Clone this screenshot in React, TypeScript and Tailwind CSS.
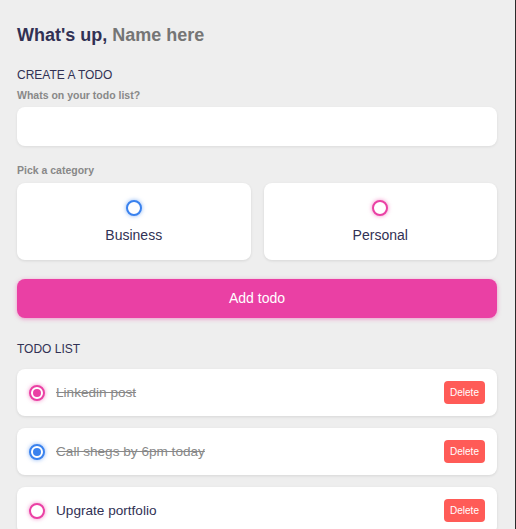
import React from "react";

type Todo = { id: number; content: string; category: "business" | "personal"; done: boolean };

const todos: Todo[] = [
  { id: 1, content: "Linkedin post", category: "personal", done: true },
  { id: 2, content: "Call shegs by 6pm today", category: "business", done: true },
  { id: 3, content: "Upgrate portfolio", category: "personal", done: false },
];

const bubbleColors = {
  business: "border-[#3a82ee] shadow-[0_0_4px_rgba(58,130,238,0.6)]",
  personal: "border-[#ea40a4] shadow-[0_0_4px_rgba(234,64,164,0.6)]",
};

const dotColors = {
  business: "bg-[#3a82ee]",
  personal: "bg-[#ea40a4]",
};

function Bubble({ category, checked }: { category: Todo["category"]; checked?: boolean }) {
  return (
    <span
      className={`flex h-4 w-4 shrink-0 items-center justify-center rounded-full border-2 bg-white ${bubbleColors[category]}`}
    >
      {checked && <span className={`h-2 w-2 rounded-full ${dotColors[category]}`} />}
    </span>
  );
}

export default function App() {
  return (
    <div className="h-[529px] w-[516px] overflow-hidden border-r border-[#2b2b2b] bg-[#eeeeee] font-['Liberation_Sans',Arial,sans-serif]">
      <div className="pl-[17px] pr-[18px] pt-[24px] pb-6">
        {/* Greeting */}
        <h2 className="text-[18px] font-bold leading-[22px] text-[#313154]">
          What's up, <span className="text-[#757575]">Name here</span>
        </h2>

        {/* Create todo */}
        <h3 className="mt-[22px] text-[12px] leading-[14px] text-[#313154]">CREATE A TODO</h3>
        <h4 className="mt-[7px] text-[10.5px] font-bold leading-[12px] text-[#888888]">Whats on your todo list?</h4>
        <div className="mt-[6px] h-[39px] rounded-lg bg-white shadow-[0_1px_3px_rgba(0,0,0,0.08)]" />

        <h4 className="mt-[18px] text-[10.5px] font-bold leading-[12px] text-[#888888]">Pick a category</h4>
        <div className="mt-[7px] grid grid-cols-2 gap-[13px]">
          {(["business", "personal"] as const).map((cat) => (
            <div
              key={cat}
              className="flex h-[77px] flex-col items-center rounded-lg bg-white pt-[17px] shadow-[0_1px_3px_rgba(0,0,0,0.1)]"
            >
              <Bubble category={cat} />
              <span className="mt-[11px] text-[14px] leading-[16px] text-[#313154]">
                {cat === "business" ? "Business" : "Personal"}
              </span>
            </div>
          ))}
        </div>

        <button className="mt-[19px] flex h-[39px] w-full items-center justify-center rounded-lg bg-[#ea40a4] text-[14px] text-white shadow-[0_1px_4px_rgba(234,64,164,0.5)]">
          Add todo
        </button>

        {/* Todo list */}
        <h3 className="mt-[24px] text-[12px] leading-[14px] text-[#313154]">TODO LIST</h3>
        <div className="mt-[13px] flex flex-col gap-[12px]">
          {todos.map((t) => (
            <div
              key={t.id}
              className="flex h-[47px] items-center rounded-lg bg-white pl-[12px] pr-[12px] shadow-[0_1px_3px_rgba(0,0,0,0.1)]"
            >
              <Bubble category={t.category} checked={t.done} />
              <span
                className={`ml-[11px] flex-1 text-[13.6px] leading-[16px] ${
                  t.done ? "text-[#888888] line-through" : "text-[#313154]"
                }`}
              >
                {t.content}
              </span>
              <button className="flex h-[23px] w-[41px] items-center justify-center rounded-[4px] bg-[#ff5b57] text-[10px] text-white">
                Delete
              </button>
            </div>
          ))}
        </div>
      </div>
    </div>
  );
}
